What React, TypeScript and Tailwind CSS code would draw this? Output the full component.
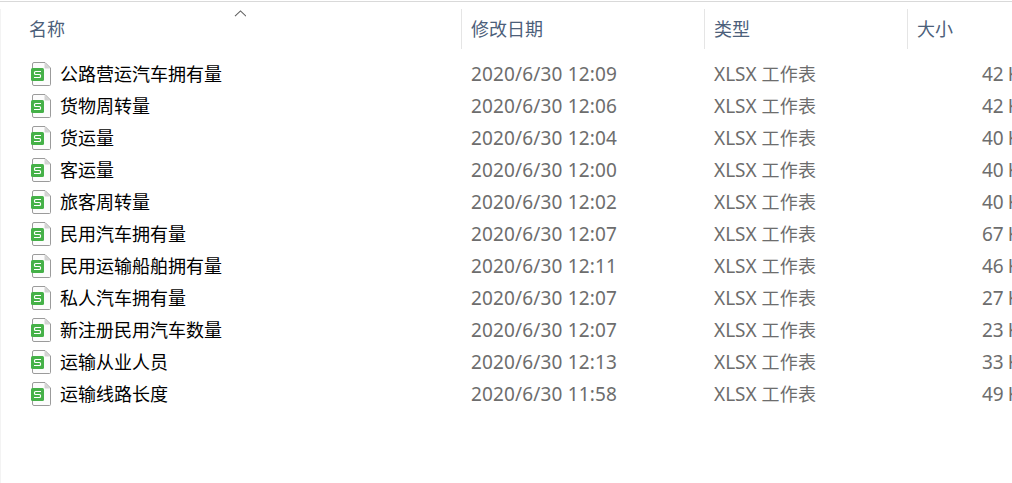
type FileEntry = {
  name: string;
  modified: string;
  size: string;
};

const files: FileEntry[] = [
  { name: "公路营运汽车拥有量", modified: "2020/6/30 12:09", size: "42 KB" },
  { name: "货物周转量", modified: "2020/6/30 12:06", size: "42 KB" },
  { name: "货运量", modified: "2020/6/30 12:04", size: "40 KB" },
  { name: "客运量", modified: "2020/6/30 12:00", size: "40 KB" },
  { name: "旅客周转量", modified: "2020/6/30 12:02", size: "40 KB" },
  { name: "民用汽车拥有量", modified: "2020/6/30 12:07", size: "67 KB" },
  { name: "民用运输船舶拥有量", modified: "2020/6/30 12:11", size: "46 KB" },
  { name: "私人汽车拥有量", modified: "2020/6/30 12:07", size: "27 KB" },
  { name: "新注册民用汽车数量", modified: "2020/6/30 12:07", size: "23 KB" },
  { name: "运输从业人员", modified: "2020/6/30 12:13", size: "33 KB" },
  { name: "运输线路长度", modified: "2020/6/30 11:58", size: "49 KB" },
];

const gridColumns = "grid grid-cols-[461px_243px_203px_180px]";

function SheetIcon() {
  return (
    <svg width="22" height="26" viewBox="0 0 22 26" fill="none" className="shrink-0">
      <path
        d="M4 1.5H15L20.5 7V23.5A1 1 0 0 1 19.5 24.5H4A1.5 1.5 0 0 1 2.5 23V3A1.5 1.5 0 0 1 4 1.5Z"
        fill="#fcfcfc"
        stroke="#9b9b9b"
      />
      <path d="M14.5 2V6.5A1 1 0 0 0 15.5 7.5H20Z" fill="#d2d2d2" />
      <rect x="1" y="7" width="13" height="13" rx="1.5" fill="#45b148" />
      <path
        d="M11 10.5H5.5A1 1 0 0 0 4.5 11.5V12.5A1 1 0 0 0 5.5 13.5H9.5A1 1 0 0 1 10.5 14.5V15.5A1 1 0 0 1 9.5 16.5H4"
        stroke="white"
        strokeWidth="1.15"
      />
    </svg>
  );
}

function HeaderRow() {
  return (
    <div className={`${gridColumns} relative h-10 text-[18px] leading-[39px] text-[#4c607a]`}>
      <div className="pl-[29px] pt-px">名称</div>
      <div className="border-l border-[#e5e5e5] pl-[9px] pt-px">修改日期</div>
      <div className="border-l border-[#e5e5e5] pl-[9px] pt-px">类型</div>
      <div className="border-l border-[#e5e5e5] pl-[9px] pt-px">大小</div>
      {/* ascending sort marker */}
      <svg width="12" height="7" viewBox="0 0 12 7" fill="none" className="absolute left-[234px] top-[1px]">
        <path d="M1 6.2L6.5 0.9L12 6.2" stroke="#606060" strokeWidth="1.1" />
      </svg>
    </div>
  );
}

function FileRow({ file }: { file: FileEntry }) {
  return (
    <div className={`${gridColumns} h-8 text-[19px] leading-8 text-[#6d6d6d]`}>
      <div className="flex items-center pl-[30px] text-[18px] text-black">
        <SheetIcon />
        <span className="ml-2">{file.name}</span>
      </div>
      <div className="pl-[10px] tracking-[0.15px]">{file.modified}</div>
      <div className="pl-[10px]">
        XLSX <span className="text-[18px] tracking-[0.2px]">工作表</span>
      </div>
      <div className="pl-[75px] [word-spacing:-1px]">{file.size}</div>
    </div>
  );
}

export default function App() {
  return (
    <div className="h-[483px] w-[1012px] overflow-hidden bg-white pt-px font-['Noto_Sans','Noto_Sans_CJK_SC',sans-serif] whitespace-nowrap">
      <div className="border-t border-[#d9d9d9] pt-[7px]">
        <div className="h-[474px] shadow-[inset_1px_0_0_#f3f3f3]">
          <HeaderRow />
          <div className="pt-[9px]">
            {files.map((file) => (
              <FileRow key={file.name} file={file} />
            ))}
          </div>
        </div>
      </div>
    </div>
  );
}
